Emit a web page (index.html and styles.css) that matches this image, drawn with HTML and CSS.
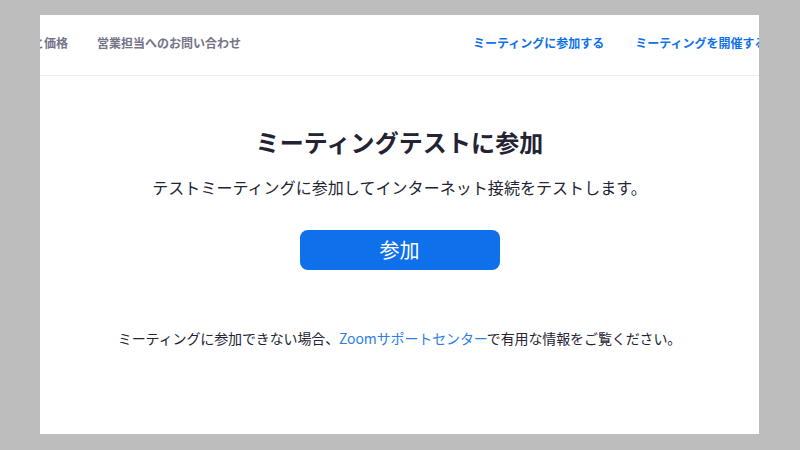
FILE: index.html
```html
<!DOCTYPE html>
<html lang="ja">
<head>
<meta charset="utf-8">
<link rel="stylesheet" href="styles.css">
</head>
<body>
<div class="panel">
  <nav class="nav">
    <a class="nav-item nav-left first">プランと価格</a>
    <a class="nav-item nav-left second">営業担当へのお問い合わせ</a>
    <a class="nav-item nav-right right-start">ミーティングに参加する</a>
    <a class="nav-item nav-right right-next">ミーティングを開催する</a>
  </nav>
  <main class="main">
    <h1 class="title">ミーティングテストに参加</h1>
    <p class="subtitle">テストミーティングに参加してインターネット接続をテストします。</p>
    <button class="join">参加</button>
    <p class="help">ミーティングに参加できない場合、<a class="help-link">Zoomサポートセンター</a>で有用な情報をご覧ください。</p>
  </main>
</div>
</body>
</html>
```
FILE: styles.css
```css
html, body {
  margin: 0;
  padding: 0;
}
body {
  background: #bdbdbd;
  font-family: "Noto Sans CJK JP", "Noto Sans", sans-serif;
  width: 800px;
  height: 450px;
  overflow: hidden;
}
.panel {
  margin: 15px 0 0 40px;
  width: 719px;
  height: 419px;
  background: #ffffff;
  overflow: hidden;
}
.nav {
  display: flex;
  align-items: center;
  height: 56px;
  padding-bottom: 4px;
  border-bottom: 1px solid #ededf4;
  white-space: nowrap;
}
.nav-item {
  font-size: 12px;
  font-weight: 700;
  line-height: 16px;
  flex: none;
}
.nav-left {
  color: #747487;
}
.nav-right {
  color: #0e71eb;
}
.first {
  margin-left: -44px;
}
.second {
  margin-left: 29px;
}
.right-start {
  margin-left: 232px;
}
.right-next {
  margin-left: 31px;
}
.main {
  display: flex;
  flex-direction: column;
  align-items: center;
}
.title {
  margin: 50px 0 0;
  font-size: 24px;
  line-height: 32px;
  font-weight: 700;
  color: #232333;
  letter-spacing: 0.1px;
}
.subtitle {
  margin: 17px 0 0;
  font-size: 16px;
  line-height: 24px;
  color: #232333;
  letter-spacing: 0.05px;
}
.join {
  margin-top: 31px;
  width: 200px;
  height: 40px;
  border: none;
  border-radius: 8px;
  background: #0e71eb;
  color: #ffffff;
  font-family: "Noto Sans CJK JP", "Noto Sans", sans-serif;
  font-size: 20px;
  line-height: 40px;
  padding: 0;
}
.help {
  margin: 58px 0 0;
  font-size: 14px;
  line-height: 20px;
  color: #232333;
  letter-spacing: -0.12px;
}
.help-link {
  color: #2d7fe6;
}
```
